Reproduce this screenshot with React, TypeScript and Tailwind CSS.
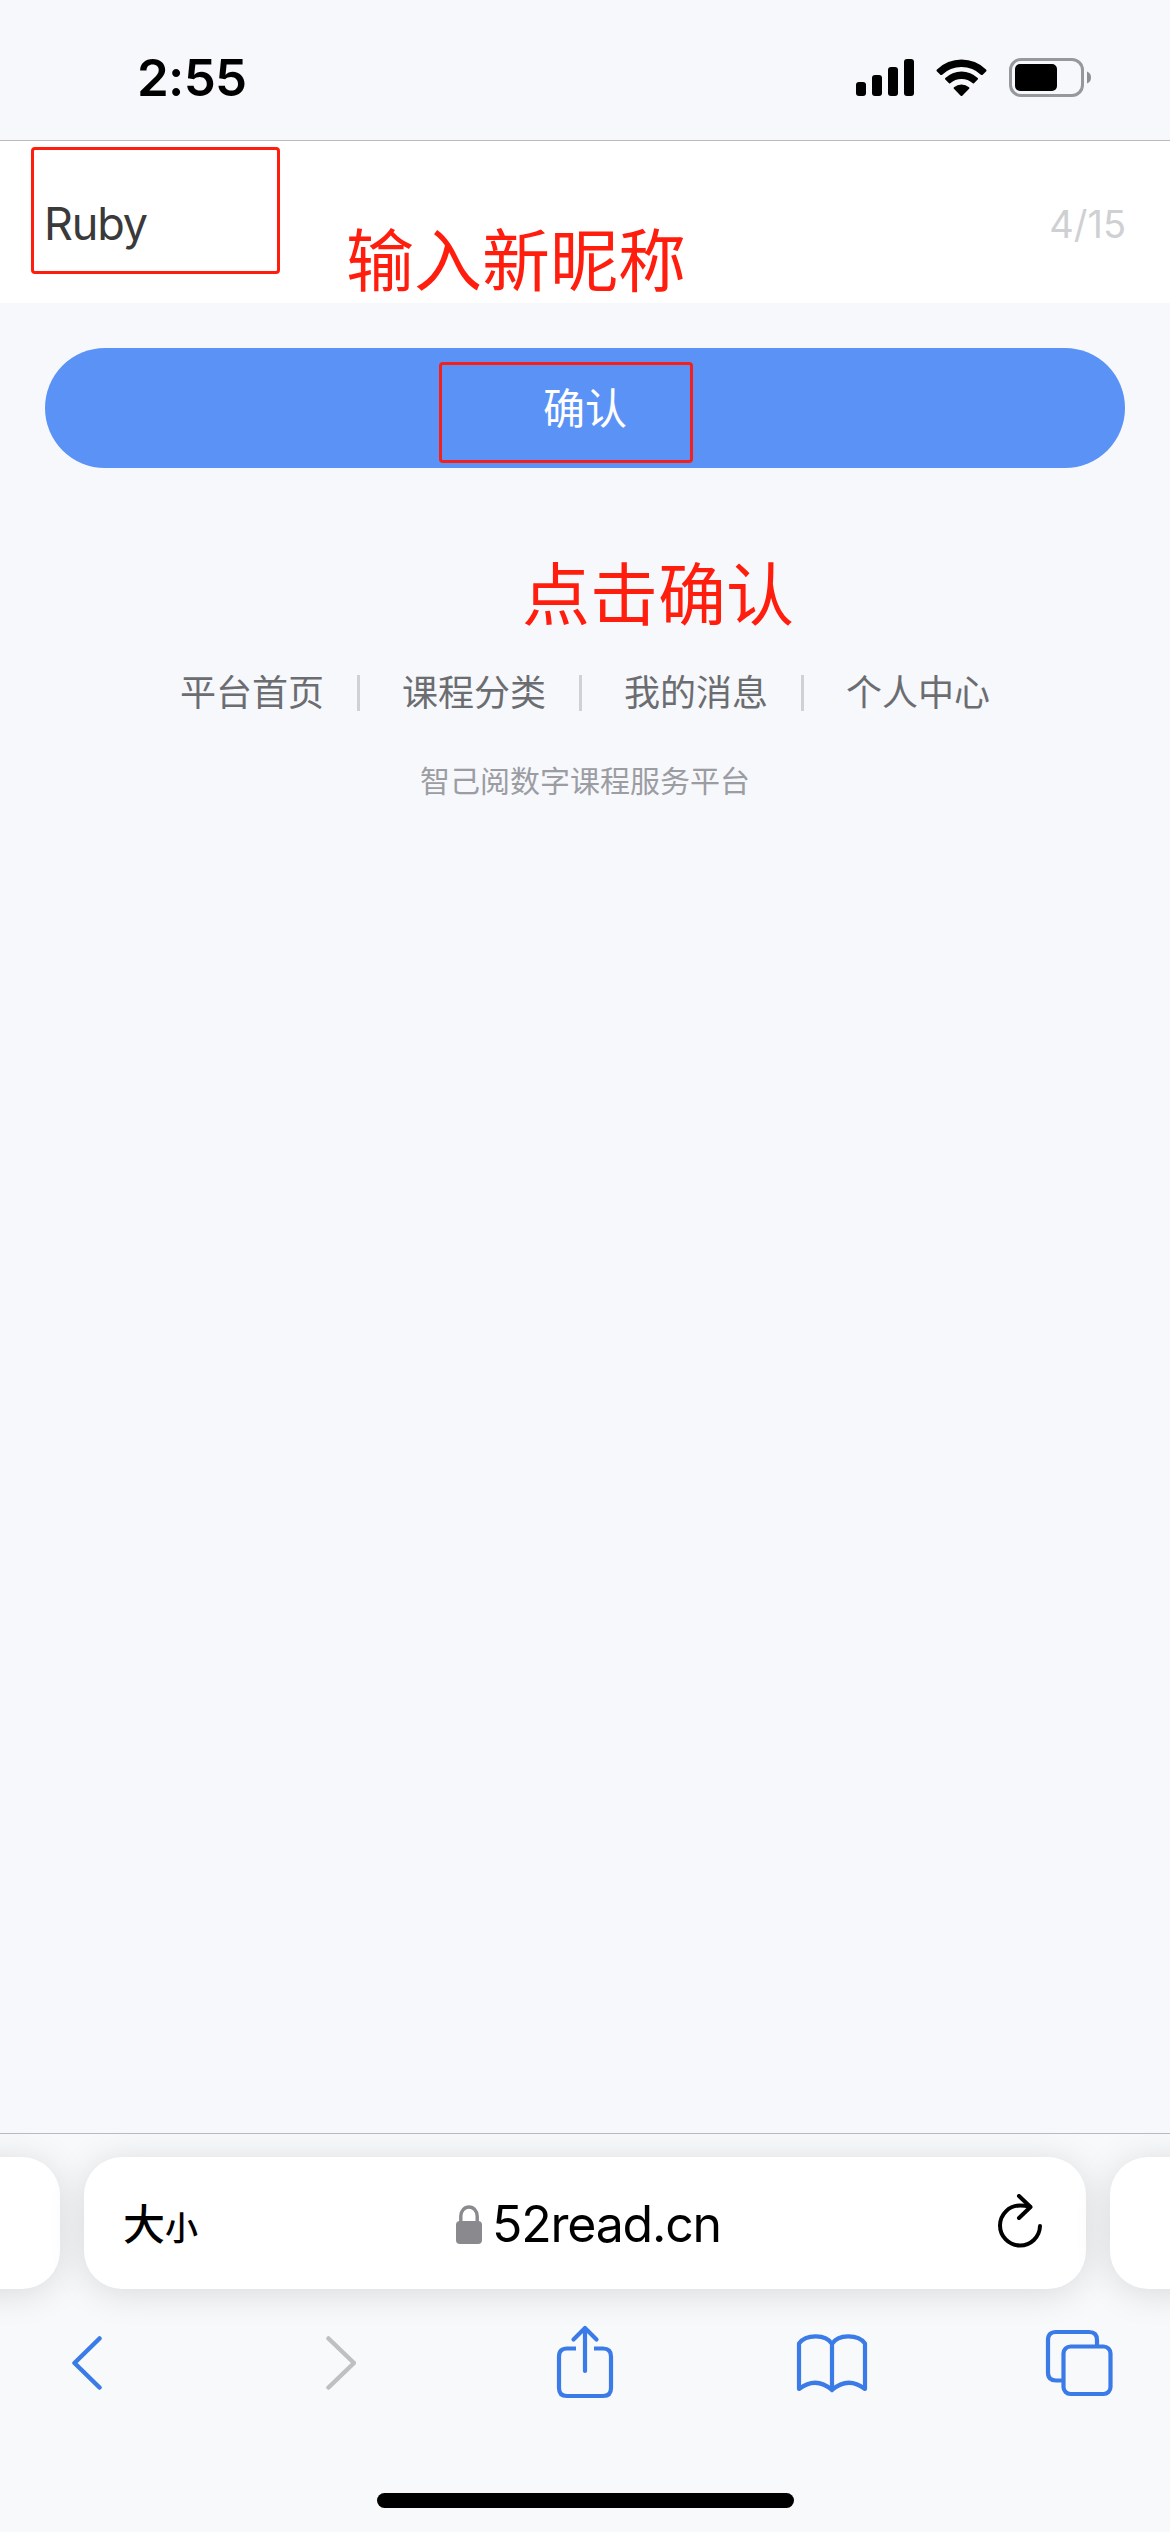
const footerLinks = ['平台首页', '课程分类', '我的消息', '个人中心'];

export default function App() {
  return (
    <div className="relative flex h-[2532px] w-[1170px] flex-col overflow-hidden bg-[#f7f8fc] font-['Inter','Noto_Sans_CJK_SC',sans-serif]">
      <StatusBar />
      <NicknameForm />
      <PageFooter />
      <BrowserBar />
      <Annotations />
    </div>
  );
}

function StatusBar() {
  return (
    <header className="flex h-[141px] shrink-0 items-start border-b border-[#b9babd] pr-[78px] pl-[137px]">
      <span className="mt-[46px] text-[51px] leading-[64px] font-semibold tracking-[-0.7px] text-black">2:55</span>
      <div className="mt-[58px] ml-auto flex">
        <svg width="58" height="39" viewBox="0 0 58 39">
          <rect x="0" y="24" width="10" height="14" rx="3" />
          <rect x="16" y="17" width="10" height="21" rx="3" />
          <rect x="32" y="9" width="10" height="29" rx="3" />
          <rect x="48" y="1" width="10" height="37" rx="3" />
        </svg>
        <svg className="ml-[22px]" width="51" height="39" viewBox="0 0 51 39">
          <path d="M1 11.5a35 35 0 0 1 49 0q1 1 0 2l-3.600 3.400q-.6.400-1.200 0a28.500 28.500 0 0 0-39.400 0q-.6.400-1.200 0L1 13.500q-1-1 0-2z" />
          <path d="M9.300 20a23.500 23.500 0 0 1 32.400 0q.8.800 0 1.500l-3.700 3.800q-.6.500-1.200 0a16.800 16.800 0 0 0-22.600 0q-.6.500-1.200 0l-3.700-3.800q-.8-.8 0-1.500z" />
          <path d="M18 29.200a11.500 11.500 0 0 1 15 0q.9.800.1 1.600l-6.800 6.900q-.8.700-1.600 0l-6.800-6.900q-.8-.8.100-1.600z" />
        </svg>
        <svg className="ml-[22px]" width="83" height="39" viewBox="0 0 83 39">
          <rect x="1.500" y="1.500" width="72" height="36" rx="10.500" fill="none" stroke="#97989b" strokeWidth="3" />
          <rect x="6" y="6" width="42" height="27" rx="5" />
          <path d="M78 13.500q4 1.500 4 6t-4 6z" fill="#8e8f92" />
        </svg>
      </div>
    </header>
  );
}

function NicknameForm() {
  return (
    <>
      <div className="flex h-[162px] shrink-0 items-center justify-between bg-white pt-[4px] pr-[44px] pl-[44px]">
        <span className="text-[45px] leading-[60px] font-normal tracking-[-1.200px] text-[#3a3a3a]">Ruby</span>
        <span className="text-[38px] leading-[60px] font-normal text-[#cfd0d3]">4/15</span>
      </div>
      <button className="mx-[45px] mt-[45px] h-[120px] shrink-0 rounded-full bg-[#5b92f6] text-[42px] leading-[122px] font-normal text-white">
        确认
      </button>
    </>
  );
}

function PageFooter() {
  return (
    <div className="flex grow flex-col items-center pt-[198px]">
      <nav className="flex items-center text-[36px] leading-[54px] font-normal text-[#6b6d71]">
        {footerLinks.map((link, index) => (
          <div key={link} className="flex items-center">
            {index > 0 && <span className="mr-[42px] ml-[33px] h-[36px] w-[3px] bg-[#d0d1d4]" />}
            <span>{link}</span>
          </div>
        ))}
      </nav>
      <p className="mt-[37px] text-[30px] leading-[48px] font-normal text-[#9b9da2]">智己阅数字课程服务平台</p>
    </div>
  );
}

function BrowserBar() {
  return (
    <div className="flex h-[399px] shrink-0 flex-col overflow-hidden border-t border-[#b9babd] bg-[#f8f9fb]">
      <div className="mt-[23px] -ml-[60px] flex w-[1290px] shrink-0 gap-[24px]">
        <div className="h-[132px] w-[120px] shrink-0 rounded-[38px] bg-white shadow-[0_4px_36px_rgba(0,0,0,0.13)]" />
        <div className="flex h-[132px] w-[1002px] shrink-0 items-center rounded-[38px] bg-white pr-[43px] pl-[39px] shadow-[0_4px_36px_rgba(0,0,0,0.13)]">
          <div className="flex w-[333px] items-baseline pt-[7px] font-medium text-black">
            <span className="text-[42px] leading-[60px]">大</span>
            <span className="text-[33px] leading-[60px]">小</span>
          </div>
          <svg className="mt-[2px]" width="26" height="39" viewBox="0 0 26 39">
            <rect x="0" y="16" width="26" height="23" rx="4" fill="#8a8a8e" />
            <path d="M4.800 18V11a8.200 9 0 0 1 16.400 0v7" fill="none" stroke="#8a8a8e" strokeWidth="3.400" />
          </svg>
          <span className="mt-[2px] ml-[10px] text-[50px] leading-[60px] tracking-[-1.200px] text-black">52read.cn</span>
          <svg className="mb-[3px] ml-auto" width="46" height="56" viewBox="0 0 46 56" fill="none" stroke="#000" strokeWidth="4" strokeLinecap="round" strokeLinejoin="round">
            <path d="M43 32a20 20 0 1 1-20-20.500q5 0 9.500 1" />
            <path d="M22 2l11.500 11L22 24" />
          </svg>
        </div>
        <div className="h-[132px] w-[120px] shrink-0 rounded-[38px] bg-white shadow-[0_4px_36px_rgba(0,0,0,0.13)]" />
      </div>

      <div className="mt-[34px] flex h-[80px] items-center pl-[72px] text-[#3a7be8]">
        <svg width="30" height="54" viewBox="0 0 30 54" fill="none" stroke="currentColor" strokeWidth="4.500" strokeLinecap="round" strokeLinejoin="round">
          <path d="M27.500 2.500L2.500 27l25 24.500" />
        </svg>
        <svg className="ml-[224px]" width="30" height="54" viewBox="0 0 30 54" fill="none" stroke="#bfc0c2" strokeWidth="4.500" strokeLinecap="round" strokeLinejoin="round">
          <path d="M2.500 2.500L28 27 2.500 51.500" />
        </svg>
        <svg className="mb-[3px] ml-[200px]" width="58" height="74" viewBox="0 0 58 74" fill="none" stroke="currentColor" strokeWidth="4.200" strokeLinecap="round" strokeLinejoin="round">
          <path d="M20 23.500H11q-8 0-8 8V63q0 8 8 8h36q8 0 8-8V31.500q0-8-8-8h-9" strokeLinecap="butt" />
          <path d="M29 46V3M17.500 14.500L29 3l11.500 11.500" />
        </svg>
        <svg className="ml-[182px]" width="72" height="60" viewBox="0 0 72 60" fill="none" stroke="currentColor" strokeWidth="4.200" strokeLinecap="round" strokeLinejoin="round">
          <path d="M36 11C30 1 10 1 3 10.500V56q17-13 33 1V11zM36 11c6-10 26-10 33-.5V56q-17-13-33 1" />
        </svg>
        <svg className="ml-[177px]" width="69" height="68" viewBox="0 0 69 68" fill="none" stroke="currentColor" strokeWidth="4.200">
          <path d="M18 51.500h-7q-8 0-8-8V11q0-8 8-8h33q8 0 8 8v6" />
          <rect x="18.500" y="17.500" width="47" height="47.500" rx="7" />
        </svg>
      </div>

      <div className="mt-auto mb-[24px] ml-[377px] h-[15px] w-[417px] shrink-0 rounded-full bg-black" />
    </div>
  );
}

// Red step marks laid over the page
function Annotations() {
  return (
    <div className="pointer-events-none absolute inset-0 text-[68px] leading-[80px] text-[#ff1d0d]">
      <div className="absolute top-[147px] left-[31px] h-[127px] w-[249px] rounded-[4px] border-[3px] border-[#ff1d0d]" />
      <span className="absolute top-[221px] left-[346px] whitespace-nowrap">输入新昵称</span>
      <div className="absolute top-[362px] left-[439px] h-[101px] w-[254px] rounded-[4px] border-[3px] border-[#f5201c]" />
      <span className="absolute top-[555px] left-[522px] whitespace-nowrap">点击确认</span>
    </div>
  );
}
